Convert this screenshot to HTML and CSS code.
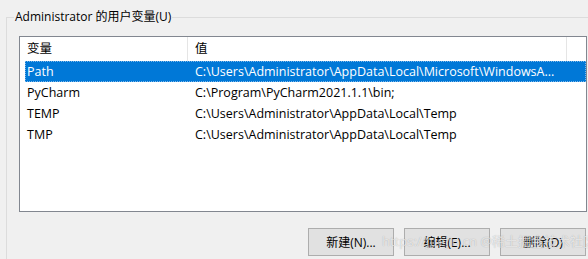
FILE: index.html
```
<!DOCTYPE html>
<html>
<head>
<meta charset="utf-8">
<link rel="stylesheet" href="styles.css">
</head>
<body>
<div class="page">
  <fieldset class="group">
    <legend class="group-title">Administrator 的用户变量(U)</legend>
    <div class="list">
      <div class="list-inner">
        <div class="row head">
          <div class="cell c1">变量</div>
          <div class="cell c2">值</div>
        </div>
        <div class="row selected">
          <div class="cell c1">Path</div>
          <div class="cell c2">C:\Users\Administrator\AppData\Local\Microsoft\WindowsA...</div>
        </div>
        <div class="row">
          <div class="cell c1">PyCharm</div>
          <div class="cell c2">C:\Program\PyCharm2021.1.1\bin;</div>
        </div>
        <div class="row">
          <div class="cell c1">TEMP</div>
          <div class="cell c2">C:\Users\Administrator\AppData\Local\Temp</div>
        </div>
        <div class="row">
          <div class="cell c1">TMP</div>
          <div class="cell c2">C:\Users\Administrator\AppData\Local\Temp</div>
        </div>
      </div>
    </div>
    <div class="buttons">
      <button class="btn">新建(N)...</button>
      <button class="btn">编辑(E)...</button>
      <button class="btn">删除(D)</button>
    </div>
  </fieldset>
  <div class="watermark">https://juejin.cn @稀土掘金技术社区</div>
</div>
</body>
</html>
```
FILE: styles.css
```
* { box-sizing: border-box; }
html, body {
  margin: 0;
  padding: 0;
  background: #f0f0f0;
}
body {
  font-family: "Open Sans", "Noto Sans CJK SC", sans-serif;
  font-size: 12px;
  color: #000;
  width: 588px;
  height: 259px;
  overflow: hidden;
}
.page {
  position: relative;
  width: 588px;
  height: 259px;
  padding-top: 9px;
  overflow: hidden;
}
.group {
  margin: 0 0 0 6px;
  padding: 11px 0 0 12px;
  border: 1px solid #dcdcdc;
  border-right: none;
  border-bottom: none;
  min-width: 0;
  width: 582px;
  height: 250px;
}
.group-title {
  padding: 0 1px;
  margin-left: -5px;
  line-height: 16px;
  font-size: 12px;
}
.list {
  width: 568px;
  height: 176px;
  background: #fff;
  border: 1px solid #828790;
  padding-left: 5px;
}
.row {
  display: grid;
  grid-template-columns: 163px 379px;
  height: 21px;
  line-height: 21px;
  white-space: nowrap;
  font-size: 12.5px;
}
.row.head {
  height: 24px;
  line-height: 24px;
}
.head .cell {
  border-right: 1px solid #e5e5e5;
}
.cell {
  overflow: hidden;
}
.c1 { padding-left: 2px; }
.c2 { padding-left: 7px; }
.head .c1 { margin-left: -5px; padding-left: 7px; width: 168px; }
.row.selected {
  background: #0078d7;
  color: #fff;
  outline: 1px dotted #7fb8ea;
  outline-offset: -1px;
}
.buttons {
  display: flex;
  justify-content: flex-end;
  gap: 10px;
  width: 567px;
  margin-top: 16px;
}
.btn {
  width: 86px;
  height: 28px;
  background: #e1e1e1;
  border: 1px solid #adadad;
  font-family: "Open Sans", "Noto Sans CJK SC", sans-serif;
  font-size: 12px;
  color: #000;
  padding: 0;
}
.watermark {
  position: absolute;
  left: 382px;
  top: 233px;
  font-family: "Open Sans", "Noto Sans CJK SC", sans-serif;
  font-size: 13px;
  line-height: 16px;
  color: rgba(255, 255, 255, 0.7);
  text-shadow: 0 0 1px rgba(0, 0, 0, 0.3);
  white-space: nowrap;
}
```
